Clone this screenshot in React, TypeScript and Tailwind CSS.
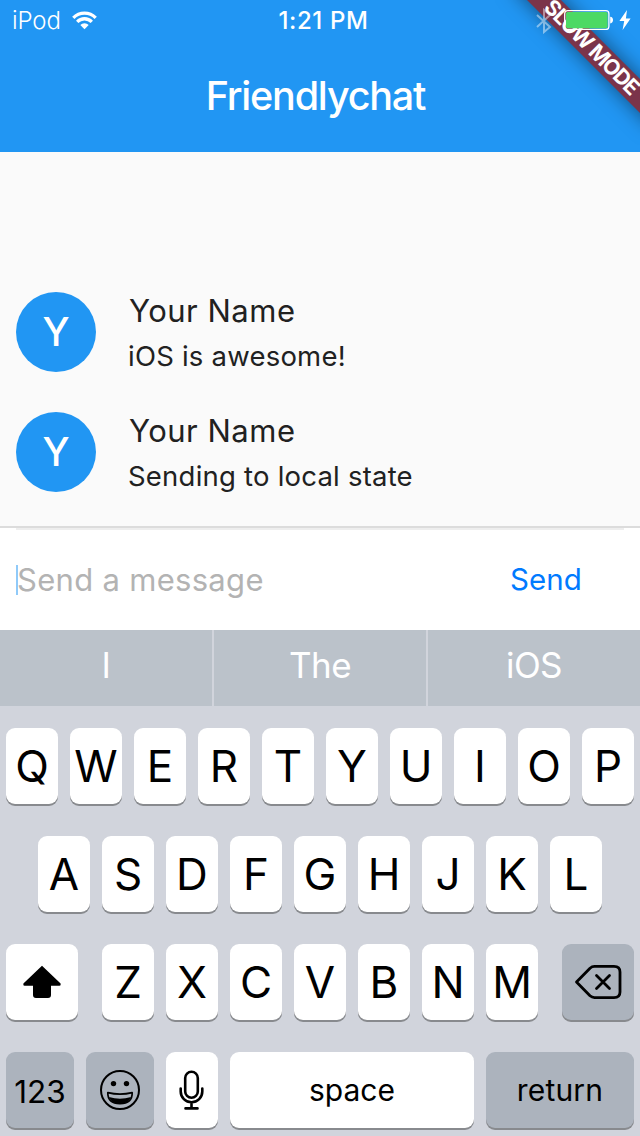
import type { ReactNode } from "react";

function StatusBar() {
  return (
    <div className="relative z-20 flex h-10 items-center justify-between text-white">
      <div className="flex items-center pl-3">
        <span className="w-[60px] pt-[2px] text-[24px] leading-10 font-[350] tracking-[-0.1px]">iPod</span>
        <svg className="h-[19px] w-[25px]" viewBox="0 0 25 19" fill="none" stroke="white" strokeWidth="3.3">
          <path d="M1.3 6.8A15.8 15.8 0 0 1 23.7 6.8" />
          <path d="M5.2 10.8A10.3 10.3 0 0 1 19.8 10.8" />
          <path d="M12.5 18.2L8.3 13.9A6 6 0 0 1 16.7 13.9Z" fill="white" stroke="none" />
        </svg>
      </div>
      <div className="flex items-center pr-[9px]">
        <svg className="mt-[2px] h-[26px] w-[16px] opacity-45" viewBox="0 0 16 26" fill="none" stroke="white" strokeWidth="2">
          <path d="M1 7L14 19L8 24V2L14 7L1 19" />
        </svg>
        <svg className="ml-[12px] h-[20px] w-[50px]" viewBox="0 0 50 20">
          <rect x="0.7" y="0.7" width="44.2" height="18.8" rx="3" fill="none" stroke="white" strokeWidth="1.3" />
          <rect x="2" y="2" width="41.6" height="16.2" rx="1.6" fill="#4cd964" />
          <path d="M46.2 6.8Q49 7.2 49 10.1T46.2 13.4Z" fill="white" />
        </svg>
        <svg className="ml-[5px] h-[20px] w-[12px]" viewBox="0 0 12 20" fill="white">
          <path d="M8 0L0.4 11H5.2L3.6 20L11.6 8.6H6.9Z" />
        </svg>
      </div>
      <span className="absolute inset-x-0 top-0 pl-[7px] text-center text-[24px] leading-[42px] font-medium tracking-[0.6px]">
        1:21 PM
      </span>
    </div>
  );
}

function Message({ text }: { text: string }) {
  return (
    <div className="flex h-[120px] pt-5 pl-4 text-[#212121]">
      <div className="flex size-20 shrink-0 items-center justify-center rounded-full bg-[#2196f3] text-[39px] font-medium text-white">
        Y
      </div>
      <div className="ml-8">
        <div className="h-[38px] pl-px text-[31px] leading-[38px] tracking-[0.5px]">Your Name</div>
        <div className="mt-[9px] h-[34px] text-[27.5px] leading-[34px] tracking-[0.22px]">{text}</div>
      </div>
    </div>
  );
}

function Key({ children, className = "w-[52px] bg-white text-[44px]" }: { children: ReactNode; className?: string }) {
  return (
    <div
      className={`flex h-[76px] shrink-0 items-center justify-center rounded-[9px] leading-none text-black shadow-[0_2px_0_#888a8e] ${className}`}
    >
      {children}
    </div>
  );
}

function Letters({ keys }: { keys: string }) {
  return (
    <div className="flex gap-3">
      {keys.split("").map((k) => (
        <Key key={k}>{k}</Key>
      ))}
    </div>
  );
}

function Keyboard() {
  return (
    <div className="flex h-[430px] flex-col gap-8 overflow-hidden bg-[#d1d4dc] px-1.5 pt-[22px]">
      <Letters keys="QWERTYUIOP" />
      <div className="flex justify-center">
        <Letters keys="ASDFGHJKL" />
      </div>
      <div className="flex justify-between">
        <Key className="w-[72px] bg-white">
          <svg className="h-[34px] w-[40px]" viewBox="0 0 40 34">
            <path
              d="M20 0.8L38.6 18.6Q39.2 20.8 37.5 20.8H29V30Q29 33 26 33H14Q11 33 11 30V20.8H2.5Q0.8 20.8 1.4 18.6Z"
              fill="black"
            />
          </svg>
        </Key>
        <Letters keys="ZXCVBNM" />
        <Key className="w-[72px] bg-[#acb3bd]">
          <svg
            className="h-[36px] w-[48px]"
            viewBox="0 0 48 36"
            fill="none"
            stroke="black"
            strokeWidth="2.8"
            strokeLinecap="round"
            strokeLinejoin="round"
          >
            <path d="M2.5 18L16 4.2Q18 2.4 20.5 2.4H40Q46 2.4 46 8V28Q46 33.6 40 33.6H20.5Q18 33.6 16 31.8Z" />
            <path d="M22.5 11.5L35.5 24.5M35.5 11.5L22.5 24.5" />
          </svg>
        </Key>
      </div>
      <div className="flex gap-3">
        <Key className="w-[68px] bg-[#acb3bd] pt-[4px] text-[31.5px]">123</Key>
        <Key className="w-[68px] bg-[#acb3bd]">
          <svg className="size-[40px]" viewBox="0 0 40 40">
            <circle cx="20" cy="20" r="19" fill="none" stroke="black" strokeWidth="2" />
            <circle cx="13.5" cy="13.6" r="2.7" />
            <circle cx="26.5" cy="13.6" r="2.7" />
            <path
              d="M7.8 22.6Q20 25.6 32.2 22.6Q32.5 33.6 20 33.6T7.8 22.6Z"
              fill="none"
              stroke="black"
              strokeWidth="1.7"
              strokeLinejoin="round"
            />
            <path d="M9 27Q20 30.4 31 27Q28.5 34 20 34T9 27Z" />
          </svg>
        </Key>
        <Key className="w-[52px] bg-white">
          <svg
            className="h-[40px] w-[26px]"
            viewBox="0 0 26 40"
            fill="none"
            stroke="black"
            strokeWidth="2.6"
            strokeLinecap="round"
          >
            <rect x="6.2" y="1.8" width="12.6" height="26" rx="6.3" />
            <path d="M1.7 18.5V21.5A10.8 10.8 0 0 0 23.3 21.5V18.5M12.5 33V38M6.5 38.4H18.5" />
          </svg>
        </Key>
        <Key className="w-[244px] bg-white pb-px text-[30px]">space</Key>
        <Key className="w-[148px] bg-[#acb3bd] pb-px text-[30px] tracking-[0.2px]">return</Key>
      </div>
    </div>
  );
}

export default function App() {
  return (
    <div className="relative flex h-[1136px] w-[640px] flex-col overflow-hidden bg-[#fafafa] font-['Inter',sans-serif]">
      <header className="h-[152px] bg-[#2196f3]">
        <StatusBar />
        <h1 className="pr-[9px] text-center text-[39.5px] leading-[113px] font-medium tracking-[-1.2px] text-white">
          Friendlychat
        </h1>
      </header>

      <main className="flex h-[374px] flex-col justify-end pb-[14px]">
        <Message text="iOS is awesome!" />
        <Message text="Sending to local state" />
      </main>

      <section className="h-[104px] border-t-2 border-[#dcdcdc] bg-white px-4">
        <div className="flex h-[102px] items-center border-t-2 border-[#eeeeee]">
          <div className="h-[30px] w-[2px] bg-[#90caf9]" />
          <div className="-ml-px grow text-[31px] tracking-[0.3px] text-[#b3b3b3]">Send a message</div>
          <button className="mr-[42px] pb-px text-[29.5px] tracking-[0.1px] text-[#007aff]">Send</button>
        </div>
      </section>

      <div className="grid h-[76px] grid-cols-[212px_212px_212px] gap-[2px] bg-[#d1d4dc] text-center text-[35px] leading-[70px] font-normal tracking-[-0.6px] text-white">
        <div className="bg-[#bbc2ca]">I</div>
        <div className="bg-[#bbc2ca]">The</div>
        <div className="bg-[#bbc2ca]">iOS</div>
      </div>

      <Keyboard />

      <div className="absolute top-[36px] left-[492px] z-10 h-6 w-[200px] rotate-45 bg-[#7b344a] pr-[2px] text-center text-[21.5px] leading-[22px] font-bold tracking-[-1.2px] whitespace-nowrap text-white shadow-[0_0_20px_rgba(0,0,0,0.5)]">
        SLOW MODE
      </div>
    </div>
  );
}
